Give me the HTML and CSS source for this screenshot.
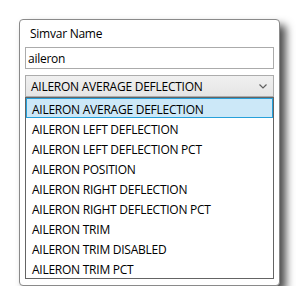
FILE: index.html
```html
<!DOCTYPE html>
<html lang="en">
<head>
    <meta charset="UTF-8" />
    <title>Simvar Name</title>
    <link rel="stylesheet" href="styles.css">
</head>
<body>
<div class="panel">
    <div class="titulo">Simvar Name</div>
    <div class="campo">aileron</div>
    <div class="selector">
        <span>AILERON AVERAGE DEFLECTION</span>
        <svg class="flecha" width="8" height="5" viewBox="0 0 8 5">
            <path d="M0.5 0.5 L4 4 L7.5 0.5" fill="none" stroke="#606060" stroke-width="1.2"/>
        </svg>
    </div>
    <ul class="lista">
        <li class="activo">AILERON AVERAGE DEFLECTION</li>
        <li>AILERON LEFT DEFLECTION</li>
        <li>AILERON LEFT DEFLECTION PCT</li>
        <li>AILERON POSITION</li>
        <li>AILERON RIGHT DEFLECTION</li>
        <li>AILERON RIGHT DEFLECTION PCT</li>
        <li>AILERON TRIM</li>
        <li>AILERON TRIM DISABLED</li>
        <li>AILERON TRIM PCT</li>
    </ul>
</div>
</body>
</html>
```

FILE: styles.css
```css
body {
  margin: 0;
  padding: 19px 0 0 19px;
  background: #fff;
  font-family: "Open Sans", "Noto Sans", sans-serif;
  font-size: 12px;
  letter-spacing: -0.25px;
  color: #000;
}

.panel {
  width: 249px;
  height: 265px;
  padding: 0 5px;
  background: #fff;
  border: 1px solid #8a8a8a;
  border-radius: 4px;
  box-shadow: 6px 6px 8px rgba(0, 0, 0, 0.7);
  display: flex;
  flex-direction: column;
}

.titulo {
  height: 27px;
  line-height: 28px;
  padding-left: 5px;
}

.campo {
  height: 20px;
  line-height: 21px;
  padding-left: 2px;
  border: 1px solid #ababab;
  margin-bottom: 6px;
}

.selector {
  height: 19px;
  padding: 1px 6px 0 5px;
  border: 1px solid #acacac;
  background: linear-gradient(#f0f0f0, #e5e5e5);
  display: flex;
  align-items: center;
  justify-content: space-between;
}

.lista {
  list-style: none;
  margin: 0;
  padding: 0;
  border: 1px solid #646464;
}

.lista li {
  height: 20px;
  line-height: 21px;
  padding-left: 5px;
  border: 1px solid transparent;
  box-sizing: border-box;
}

.lista li.activo {
  background: #cce8f8;
  border-color: #26a0da;
}
```
